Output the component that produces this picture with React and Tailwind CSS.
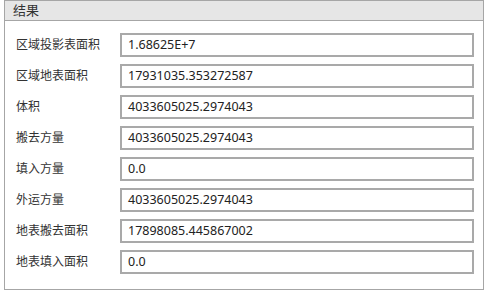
export default function App() {
  const rows = [
    { label: "区域投影表面积", value: "1.68625E+7" },
    { label: "区域地表面积", value: "17931035.353272587" },
    { label: "体积", value: "4033605025.2974043" },
    { label: "搬去方量", value: "4033605025.2974043" },
    { label: "填入方量", value: "0.0" },
    { label: "外运方量", value: "4033605025.2974043" },
    { label: "地表搬去面积", value: "17898085.445867002" },
    { label: "地表填入面积", value: "0.0" },
  ];

  return (
    <div
      className="w-[497px] h-[305px] bg-white text-[12px] text-[#333]"
      style={{ fontFamily: '"Noto Sans", "Noto Sans CJK SC", sans-serif' }}
    >
      <div className="ml-[4px] w-[480px] h-[290px] border border-[#a6a6a6] flex flex-col">
        <div className="h-[20px] bg-[#e6e6e6] border-b border-[#a6a6a6] flex items-center pl-[8px] text-[13px] text-[#333]">
          结果
        </div>
        <div className="flex flex-col gap-[7px] pt-[12px] pl-[11px] pr-[9px]">
          {rows.map((r, i) => (
            <div key={i} className="flex items-center h-[24px]">
              <div className="w-[104px] shrink-0">{r.label}</div>
              <div className="flex-1 h-[24px] border-2 border-[#a9a9a9] bg-white flex items-center pl-[6px] text-[12.5px] text-[#222]">
                {r.value}
              </div>
            </div>
          ))}
        </div>
      </div>
    </div>
  );
}
